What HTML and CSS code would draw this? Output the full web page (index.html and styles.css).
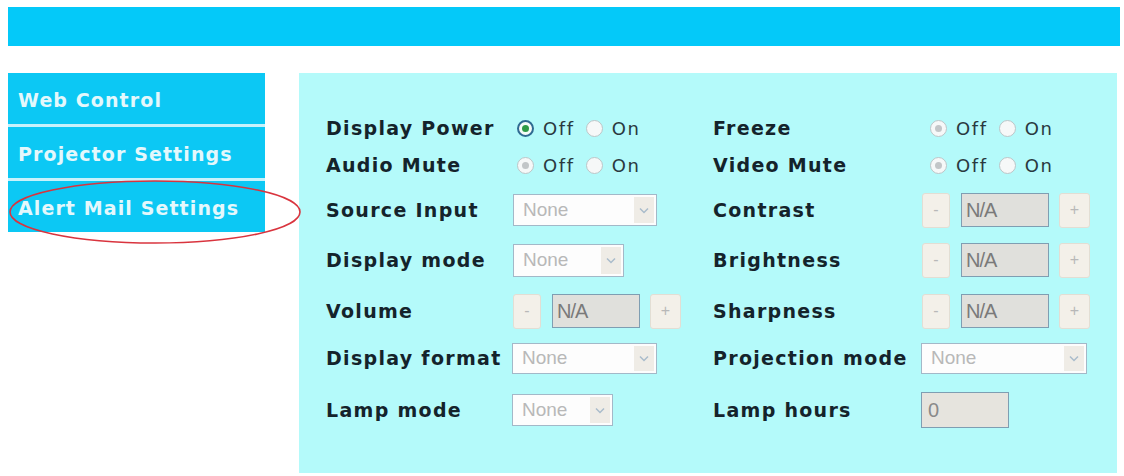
FILE: index.html
```html
<!DOCTYPE html>
<html lang="en">
<head>
<meta charset="utf-8">
<title>Web Control</title>
<link rel="stylesheet" href="styles.css">
</head>
<body>
<header class="topbar"></header>

<div class="main">
  <nav class="sidenav">
    <a class="nav-item">Web Control</a>
    <a class="nav-item">Projector Settings</a>
    <a class="nav-item">Alert Mail Settings</a>
    <svg class="mark" width="300" height="72" viewBox="0 0 300 72" aria-hidden="true">
      <ellipse cx="150" cy="35" rx="145" ry="31" fill="none" stroke="#d9343e" stroke-width="1.6"/>
    </svg>
  </nav>

  <section class="panel">
    <div class="grid">
      <!-- row 1 -->
      <div class="label">Display Power</div>
      <div class="ctrl">
        <span class="opt"><span class="radio on"></span>Off</span>
        <span class="opt"><span class="radio"></span>On</span>
      </div>
      <div class="label">Freeze</div>
      <div class="ctrl indent">
        <span class="opt"><span class="radio dis-on"></span>Off</span>
        <span class="opt"><span class="radio dis"></span>On</span>
      </div>

      <!-- row 2 -->
      <div class="label">Audio Mute</div>
      <div class="ctrl">
        <span class="opt"><span class="radio dis-on"></span>Off</span>
        <span class="opt"><span class="radio dis"></span>On</span>
      </div>
      <div class="label">Video Mute</div>
      <div class="ctrl indent">
        <span class="opt"><span class="radio dis-on"></span>Off</span>
        <span class="opt"><span class="radio dis"></span>On</span>
      </div>

      <!-- row 3 -->
      <div class="label">Source Input</div>
      <div class="ctrl">
        <div class="select w-source"><span class="value">None</span><span class="arrow"><svg width="10" height="7" viewBox="0 0 10 7"><path d="M1 1.5 L5 5.5 L9 1.5" fill="none" stroke="#a9bccb" stroke-width="1.5"/></svg></span></div>
      </div>
      <div class="label">Contrast</div>
      <div class="ctrl">
        <span class="btn minus">-</span><span class="field">N/A</span><span class="btn plus">+</span>
      </div>

      <!-- row 4 -->
      <div class="label">Display mode</div>
      <div class="ctrl">
        <div class="select w-mode"><span class="value">None</span><span class="arrow"><svg width="10" height="7" viewBox="0 0 10 7"><path d="M1 1.5 L5 5.5 L9 1.5" fill="none" stroke="#a9bccb" stroke-width="1.5"/></svg></span></div>
      </div>
      <div class="label">Brightness</div>
      <div class="ctrl">
        <span class="btn minus">-</span><span class="field">N/A</span><span class="btn plus">+</span>
      </div>

      <!-- row 5 -->
      <div class="label">Volume</div>
      <div class="ctrl">
        <span class="btn minus">-</span><span class="field">N/A</span><span class="btn plus">+</span>
      </div>
      <div class="label">Sharpness</div>
      <div class="ctrl">
        <span class="btn minus">-</span><span class="field">N/A</span><span class="btn plus">+</span>
      </div>

      <!-- row 6 -->
      <div class="label">Display format</div>
      <div class="ctrl">
        <div class="select w-format"><span class="value">None</span><span class="arrow"><svg width="10" height="7" viewBox="0 0 10 7"><path d="M1 1.5 L5 5.5 L9 1.5" fill="none" stroke="#a9bccb" stroke-width="1.5"/></svg></span></div>
      </div>
      <div class="label">Projection mode</div>
      <div class="ctrl">
        <div class="select w-proj"><span class="value">None</span><span class="arrow"><svg width="10" height="7" viewBox="0 0 10 7"><path d="M1 1.5 L5 5.5 L9 1.5" fill="none" stroke="#a9bccb" stroke-width="1.5"/></svg></span></div>
      </div>

      <!-- row 7 -->
      <div class="label">Lamp mode</div>
      <div class="ctrl">
        <div class="select w-lamp"><span class="value">None</span><span class="arrow"><svg width="10" height="7" viewBox="0 0 10 7"><path d="M1 1.5 L5 5.5 L9 1.5" fill="none" stroke="#a9bccb" stroke-width="1.5"/></svg></span></div>
      </div>
      <div class="label">Lamp hours</div>
      <div class="ctrl">
        <span class="field hours">0</span>
      </div>
    </div>
  </section>
</div>
</body>
</html>
```

FILE: styles.css
```css
* {
  box-sizing: border-box;
}

body {
  margin: 7px 4px 0 8px;
  background: #ffffff;
  font-family: "DejaVu Sans", Verdana, sans-serif;
}

/* header strip */
.topbar {
  height: 39px;
  background: #04c9f9;
}

.main {
  display: flex;
  align-items: flex-start;
  gap: 34px;
  margin-top: 27px;
}

/* left navigation */
.sidenav {
  position: relative;
  width: 257px;
  display: flex;
  flex-direction: column;
  gap: 3px;
  background: #c8f2fb;
}

.nav-item {
  display: flex;
  align-items: center;
  height: 51px;
  padding: 3px 0 0 10px;
  background: #0cc8f4;
  color: #e4f8fc;
  font-weight: bold;
  font-size: 19px;
  letter-spacing: 1.1px;
  white-space: nowrap;
}

.mark {
  position: absolute;
  left: -3px;
  top: 104px;
  pointer-events: none;
}

/* settings panel */
.panel {
  width: 818px;
  height: 400px;
  padding: 37px 0 0 27px;
  background: #b4fafa;
}

.grid {
  display: grid;
  grid-template-columns: 186px 201px 208px 1fr;
  grid-template-rows: 36px 38px 52px 48px 54px 40px 64px;
  align-items: center;
}

.label {
  font-weight: bold;
  font-size: 19px;
  letter-spacing: 1.3px;
  color: #14232b;
  white-space: nowrap;
}

.ctrl {
  display: flex;
  align-items: center;
  height: 100%;
}

.indent {
  padding-left: 4px;
}

/* radio options */
.opt {
  display: inline-flex;
  align-items: center;
  font-size: 18px;
  letter-spacing: 1.6px;
  color: #2a393f;
  margin-right: 6px;
}

.radio {
  position: relative;
  width: 17px;
  height: 17px;
  margin: 0 9px 0 5px;
  border-radius: 50%;
  border: 1px solid #bcc6c8;
  background: #f6f8f8;
}

.radio.on {
  border: 2px solid #2f6a92;
  background: #f4fbf8;
}

.radio.on::after,
.radio.dis-on::after {
  content: "";
  position: absolute;
  left: 50%;
  top: 50%;
  width: 7px;
  height: 7px;
  margin: -3.5px 0 0 -3.5px;
  border-radius: 50%;
  background: #2e9a46;
}

.radio.dis-on::after {
  background: #c2c6c8;
}

/* disabled drop-downs */
.select {
  display: flex;
  align-items: center;
  justify-content: space-between;
  height: 32px;
  padding: 2px 2px 2px 9px;
  border: 1px solid #a3b8c8;
  background: #fdfdfd;
  font-family: "Liberation Sans", Arial, sans-serif;
  font-size: 19px;
  color: #b8b8b8;
}

.select .arrow {
  display: flex;
  align-items: center;
  justify-content: center;
  width: 20px;
  height: 100%;
  background: #efece6;
}

.w-source { width: 144px; margin-left: 1px; }
.w-mode   { width: 111px; margin-left: 1px; height: 33px; }
.w-format { width: 145px; height: 31px; }
.w-lamp   { width: 101px; }
.w-proj   { width: 166px; height: 31px; }

/* steppers */
.btn {
  display: flex;
  align-items: center;
  justify-content: center;
  width: 28px;
  height: 35px;
  margin-left: 1px;
  border: 1px solid #e2ded4;
  border-radius: 3px;
  background: #f3f0e9;
  font-family: "Liberation Sans", Arial, sans-serif;
  font-size: 16px;
  color: #b8b8b8;
}

.btn.plus {
  width: 31px;
  margin-left: 10px;
}

.field {
  display: flex;
  align-items: center;
  width: 88px;
  height: 34px;
  margin-left: 11px;
  padding-left: 4px;
  border: 1px solid #7f9eb2;
  background: #e0e0dc;
  font-family: "Liberation Sans", Arial, sans-serif;
  font-size: 20px;
  letter-spacing: -1px;
  color: #7a7a7a;
}

.field.hours {
  margin-left: 0;
  height: 36px;
  padding-left: 6px;
  background: #e6e4de;
  color: #8a8a8a;
  letter-spacing: 0;
}
```
